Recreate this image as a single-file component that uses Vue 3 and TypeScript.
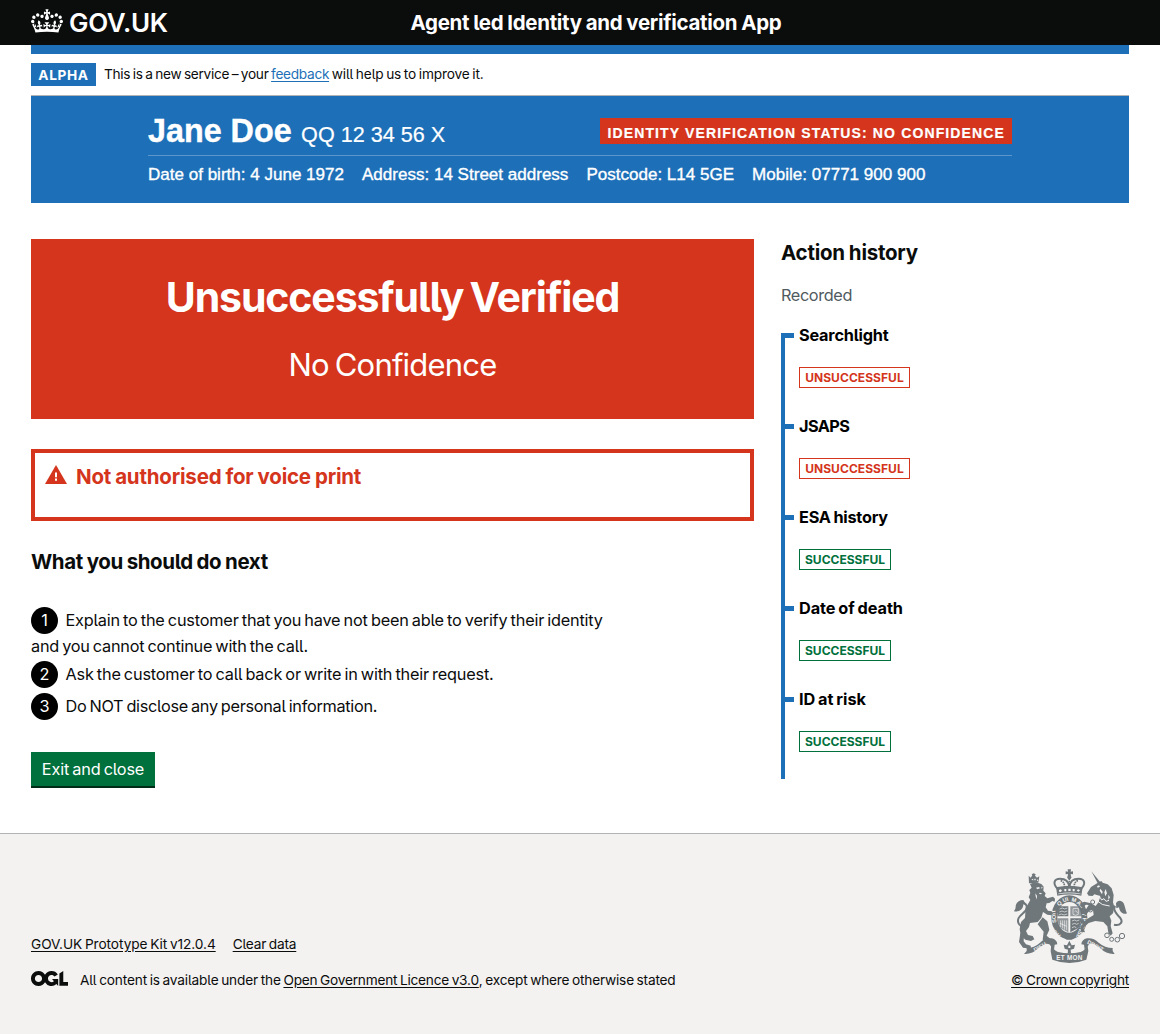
<script setup lang="ts">
interface Check {
  name: string
  passed: boolean
  tracking: string
}

interface Step {
  lines: { text: string; tracking: string }[]
}

const checks: Check[] = [
  { name: 'Searchlight', passed: false, tracking: '-0.2px' },
  { name: 'JSAPS', passed: false, tracking: '-0.6px' },
  { name: 'ESA history', passed: true, tracking: '-0.23px' },
  { name: 'Date of death', passed: true, tracking: '-0.05px' },
  { name: 'ID at risk', passed: true, tracking: '-0.02px' },
]

const steps: Step[] = [
  {
    lines: [
      { text: 'Explain to the customer that you have not been able to verify their identity', tracking: '-0.2px' },
      { text: 'and you cannot continue with the call.', tracking: '-0.24px' },
    ],
  },
  { lines: [{ text: 'Ask the customer to call back or write in with their request.', tracking: '-0.2px' }] },
  { lines: [{ text: 'Do NOT disclose any personal information.', tracking: '-0.3px' }] },
]

const details = [
  'Date of birth: 4 June 1972',
  'Address: 14 Street address',
  'Postcode: L14 5GE',
  'Mobile: 07771 900 900',
]
</script>

<template>
  <div class="page">
    <header class="header">
      <a class="logo">
        <svg class="crown" viewBox="0 0 132 97" width="32" height="24" aria-hidden="true">
          <path fill="currentColor" fill-rule="evenodd" d="M25 30.2c3.5 1.5 7.7-.2 9.1-3.7 1.5-3.6-.2-7.8-3.9-9.2-3.6-1.4-7.6.3-9.1 3.9-1.4 3.5.3 7.5 3.9 9zM9 39.5c3.6 1.5 7.8-.2 9.2-3.7 1.5-3.6-.2-7.8-3.9-9.1-3.6-1.5-7.6.2-9.1 3.8-1.4 3.5.3 7.5 3.8 9zM4.4 57.2c3.5 1.5 7.7-.2 9.1-3.8 1.5-3.6-.2-7.7-3.9-9.1-3.5-1.5-7.6.3-9.1 3.8-1.4 3.5.3 7.6 3.9 9.1zm38.3-21.4c3.5 1.5 7.7-.2 9.1-3.8 1.5-3.6-.2-7.7-3.9-9.1-3.6-1.5-7.6.3-9.1 3.8-1.3 3.6.4 7.7 3.9 9.1zm64.4-5.6c-3.6 1.5-7.8-.2-9.1-3.7-1.5-3.6.2-7.8 3.8-9.2 3.6-1.4 7.7.3 9.2 3.9 1.3 3.5-.4 7.5-3.9 9zm15.9 9.3c-3.6 1.5-7.7-.2-9.1-3.7-1.5-3.6.2-7.8 3.7-9.1 3.6-1.5 7.7.2 9.2 3.8 1.5 3.5-.3 7.5-3.8 9zm4.7 17.7c-3.6 1.5-7.8-.2-9.2-3.8-1.5-3.6.2-7.7 3.9-9.1 3.6-1.5 7.7.3 9.2 3.8 1.3 3.5-.4 7.6-3.9 9.1zM89.3 35.8c-3.6 1.5-7.8-.2-9.2-3.8-1.4-3.6.2-7.7 3.9-9.1 3.6-1.5 7.7.3 9.2 3.8 1.4 3.6-.3 7.7-3.9 9.1zM69.7 17.7l8.9 4.7V9.3l-8.9 2.8c-.2-.3-.5-.6-.9-.9L72.4 0H59.6l3.5 11.2c-.3.3-.6.5-.9.9l-8.8-2.8v13.1l8.8-4.7c.3.3.6.7.9.9l-5 15.4v.1c-.2.8-.4 1.6-.4 2.4 0 4.1 3.1 7.5 7 8.1h.2c.3 0 .7.1 1 .1.4 0 .7 0 1-.1h.2c4-.6 7.1-4.1 7.1-8.1 0-.8-.1-1.7-.4-2.4V34l-5.1-15.4c.4-.2.7-.6 1-.9zM66 92.8c16.9 0 32.8 1.1 47.1 3.2 4-16.9 8.9-26.7 14-33.5l-9.6-3.4c1 4.9 1.1 7.2 0 10.2-1.5-1.4-3-4.3-4.2-8.7L108.6 76c2.8-2 5-3.2 7.5-3.3-4.4 9.4-10 11.9-13.6 11.2-4.3-.8-6.3-4.6-5.6-7.9 1-4.7 5.7-5.9 8-.5 4.3-8.7-3-11.4-7.6-8.8 7.1-7.2 7.9-13.5 2.1-21.1-8 6.1-8.1 12.3-4.5 20.8-4.7-5.4-12.1-2.5-9.5 6.2 3.4-5.2 7.9-2 7.2 3.1-.6 4.3-6.4 7.8-13.5 7.2-10.3-.9-10.9-8-11.2-13.8 2.5-.5 7.1 1.8 11 7.3L80.2 60c-4.1 4.4-8 5.3-12.3 5.4 1.4-4.4 8-11.6 8-11.6H55.5s6.4 7.2 7.9 11.6c-4.2-.1-8-1-12.3-5.4l1.4 16.4c3.9-5.5 8.5-7.7 10.9-7.3-.3 5.8-.9 12.8-11.1 13.8-7.2.6-12.9-2.9-13.5-7.2-.7-5 3.8-8.3 7.1-3.1 2.7-8.7-4.6-11.6-9.4-6.2 3.7-8.5 3.6-14.7-4.6-20.8-5.8 7.6-5 13.9 2.2 21.1-4.7-2.6-11.9.1-7.7 8.8 2.3-5.5 7.1-4.2 8.1.5.7 3.3-1.3 7.1-5.7 7.9-3.5.7-9-1.8-13.5-11.2 2.5.1 4.7 1.3 7.5 3.3l-4.7-15.4c-1.2 4.4-2.7 7.2-4.3 8.7-1.1-3-.9-5.3 0-10.2l-9.5 3.4c5 6.9 9.9 16.7 14 33.5 14.8-2.1 30.8-3.2 47.7-3.2z" />
        </svg>
        <span class="logo-text">GOV.UK</span>
      </a>
      <span class="service">Agent led Identity and verification App</span>
    </header>

    <div class="container">
      <div class="header-bar"></div>
      <div class="phase">
        <strong class="phase-tag">ALPHA</strong>
        <span class="phase-text"><span class="p1">This is a new service – your </span><a class="feedback">feedback</a><span class="p2"> will help us to improve it.</span></span>
      </div>

      <section class="person">
        <div class="person-inner">
          <div class="person-top">
            <div class="person-name"><strong>Jane Doe</strong><span>QQ 12 34 56 X</span></div>
            <strong class="status">IDENTITY VERIFICATION STATUS: NO CONFIDENCE</strong>
          </div>
          <div class="person-details">
            <span v-for="d in details" :key="d">{{ d }}</span>
          </div>
        </div>
      </section>

      <div class="columns">
        <main class="main">
          <div class="panel">
            <h1>Unsuccessfully Verified</h1>
            <p>No Confidence</p>
          </div>
          <div class="warning">
            <svg viewBox="0 0 22 19" width="22" height="19" aria-hidden="true">
              <path fill="currentColor" d="M11 0 22 19H0z" />
              <path fill="#fff" d="M10 7.4h2v4.8h-2zM10 13.6h2v2.1h-2z" />
            </svg>
            <h2>Not authorised for voice print</h2>
          </div>
          <h2 class="next">What you should do next</h2>
          <ol class="steps">
            <li v-for="(step, i) in steps" :key="i">
              <span class="number">{{ i + 1 }}</span>
              <template v-for="(line, j) in step.lines" :key="j">
                <br v-if="j > 0" /><span :style="{ letterSpacing: line.tracking }">{{ line.text }}</span>
              </template>
            </li>
          </ol>
          <button class="button" type="button">Exit and close</button>
        </main>

        <aside class="history">
          <h2>Action history</h2>
          <p>Recorded</p>
          <ul class="timeline">
            <li v-for="c in checks" :key="c.name">
              <h3 :style="{ letterSpacing: c.tracking }">{{ c.name }}</h3>
              <strong class="badge" :class="{ passed: c.passed }">{{ c.passed ? 'SUCCESSFUL' : 'UNSUCCESSFUL' }}</strong>
            </li>
          </ul>
        </aside>
      </div>
    </div>

    <footer class="footer">
      <div class="footer-inner">
        <div>
          <div class="footer-links">
            <a class="kit">GOV.UK Prototype Kit v12.0.4</a>
            <a class="clear">Clear data</a>
          </div>
          <div class="licence">
            <svg viewBox="0 0 483.2 195.7" width="37" height="15" aria-hidden="true">
              <path fill="currentColor" d="M421.5 142.8V.1l-50.7 32.3v161.1h112.4v-50.7zm-122.3-9.6A47.12 47.12 0 0 1 221 97.8c0-26 21.1-47.1 47.1-47.1 16.7 0 31.4 8.7 39.7 21.8l42.7-27.2A97.63 97.63 0 0 0 268.1 0c-36.5 0-68.3 20.1-85.1 49.7A98 98 0 0 0 97.8 0C43.9 0 0 43.9 0 97.8s43.9 97.8 97.8 97.8c36.5 0 68.3-20.1 85.1-49.7a97.76 97.76 0 0 0 149.6 25.4l19.4 22.2h3v-87.8h-80l24.3 27.5zM97.8 145c-26 0-47.1-21.1-47.1-47.1s21.1-47.1 47.1-47.1 47.1 21.1 47.1 47.1S123.8 145 97.8 145" />
            </svg>
            <span><span class="l1">All content is available under the </span><a class="l2">Open Government Licence v3.0</a><span class="l3">, except where otherwise stated</span></span>
          </div>
        </div>
        <a class="copyright">
          <svg viewBox="42 27 339 282" width="113" height="94" aria-hidden="true">
            <g fill="#6f777b" stroke="none">
              <!-- centre crown -->
              <path d="M203 28h10l-1 7 7-1v9l-7-1 1 8h-10l1-8-7 1v-9l7 1z" />
              <g fill="none" stroke="#6f777b">
                <path stroke-width="6" d="M172 86c-15-16-9-30 8-30 14 0 26 6 28 25 2-19 14-25 28-25 17 0 23 14 8 30" />
                <path stroke-width="5" stroke-dasharray="5 2" d="M208 48v36M182 62c8 2 12 9 12 22M234 62c-8 2-12 9-12 22" />
              </g>
              <circle cx="208" cy="52" r="6" />
              <path d="M168 82q40-9 80 0l-4 25q-36-7-72 0z" />
              <path fill="#f3f2f1" d="M177 90l5-2 4 4-4 4-5-1zM193 87h6v7h-6zM205 86h7v7h-7zM218 87h6v7h-6zM230 91l5-3 5 3-5 4zM174 101q34-7 68 0v2q-34-7-68 0z" />
              <!-- garter and shield -->
              <ellipse cx="208" cy="172" rx="54" ry="66" />
              <ellipse cx="208" cy="172" rx="36" ry="46" fill="#f3f2f1" />
              <g fill="#f3f2f1" font-family="Liberation Sans, sans-serif" font-weight="700" font-size="17">
                <text transform="translate(169 188) rotate(-95)">SOIT</text>
                <text transform="translate(177 139) rotate(-42)">Q</text>
                <text transform="translate(190 127) rotate(-18)">UI</text>
                <text transform="translate(214 124) rotate(14)">M</text>
                <text transform="translate(229 129) rotate(44)">AL</text>
                <text transform="translate(246 158) rotate(84)">Y P</text>
                <text transform="translate(245 190) rotate(112)">ENSE</text>
                <text transform="translate(183 226) rotate(-135)">HON</text>
              </g>
              <path d="M176 139h29v30h-33zM211 175h33q-1 20-10 30l-23 12z" />
              <path d="M211 139h29l4 15v15h-33zM172 175h33v42l-23-12q-10-14-10-30z" opacity=".75" />
              <g fill="none" stroke="#f3f2f1" stroke-width="2">
                <path d="M179 147l8-3 7 3 8-3M178 156l8-3 7 3 9-3M176 165l8-3 8 3 10-3M216 183l8-3 6 3 8-3M216 193l8-3 6 3 6-3M216 203l7-3 6 3" />
                <path d="M219 146v17l8 3 8-3v-18zM224 154c6-6 6 7 9 3M182 181v20M188 181v24M194 181v28M200 181v30M180 190l20 9" />
              </g>
              <!-- lion -->
              <path d="M86 47l6 6 5-7-2-3 6-3 6 3-2 4 6 6 7-4-3 19-28 2z" />
              <path fill="#f3f2f1" d="M94 60l4-4 3 5zM103 56h4v5h-4zM111 58l4 3-4 3z" />
              <path d="M90 72q15-8 34 0l7 8-1 12 7 8-3 8 8 7 17-5 6 6-1 9-7-2-9 6-8 1-3 12 7 10 11 2 4 6-5 6-12-2-13-8-5 17-11 13-23 3-3 12-9 12 6 12 14 3 5 10-10 5-17-4-14-14-3-17 4-22 12-12 2-30 14-24-5-8 5-13-3-9 7-7z" />
              <path d="M128 172l14 12 6 25-8 18 16 14 4 9-14 1-18-12 3-24-18-22z" />
              <path fill="#f3f2f1" d="M108 83l9-2 3 4-8 3zM124 80l4 2-3 5zM119 98l7 2-3 3-6-2zM106 100l5 7-1 12-3-10z" />
              <path d="M61 220l-4 26 12 17 24 3-1-9-14-4-7-9 1-20z" />
              <path fill="none" stroke="#6f777b" stroke-width="6" d="M77 182c2 16-12 22-20 10-11-18 10-29 19-39 7-9 5-20-4-24" />
              <path d="M70 120c-13 0-23 8-23 20 0 8-4 10-5 14 15 3 28-6 28-21l9 2z" />
              <!-- unicorn -->
              <path d="M274 34l27 33-7 4z" />
              <path d="M296 67l8-4 4 5 15 5 12 12 6 20-2 22 4 14-4 19-10 9 5 13-2 16 6 22-6 7-7-9-3-19-12-13-24-3-20 6-16 14 5 14-12-2-2-14 17-22 23-14-2-16-12 4-9 12-10-4 2-9 8-4 8-13-8-1-10 8-8-4 4-9 9-4 20 5 14 8 9-12 5-18-18-5-5 5-12-1-5-7 12-19z" />
              <path fill="#f3f2f1" d="M291 79l6-3 3 4-7 3zM301 86l7 9-2 8-7-11zM317 87l4 13-5 9-3-12zM325 104l5 8-5 8z" />
              <path fill="none" stroke="#f3f2f1" stroke-width="3" d="M290 110l5 7 5-5 5 8 7-4 6 8 9-3M288 120q18 18 41 18" />
              <path fill="none" stroke="#6f777b" stroke-width="6" d="M342 194c19 5 28-8 19-20-12-13-23-25-16-37" />
              <path d="M348 130c4-11 18-10 23 0 4 9 6 23 10 30-10 5-22-2-24-18l-8 3z" />
              <g fill="none" stroke="#6f777b" stroke-width="3">
                <circle cx="366" cy="228" r="8" /><circle cx="352" cy="239" r="7" />
                <circle cx="335" cy="238" r="6" /><circle cx="321" cy="226" r="7" />
                <circle cx="271" cy="149" r="7" /><circle cx="278" cy="126" r="6" />
              </g>
              <!-- rose and ribbon -->
              <path d="M190 231q18-12 36 0l-10 8h-16zM208 242l7 14 10-2-3 12-10 3 1 12h-10l1-12-10-3-3-12 10 2z" />
              <path fill="#f3f2f1" d="M205 257h6v7h-6z" />
              <path d="M80 264q23 0 40-16 15-15 35-13 16 4 17 18l-8 1-2 15-14-16q-8-4-17 1l-16 11q-19 19-43 17l8-9z" />
              <path d="M338 264q-23 0-42-16-15-15-35-13-16 4-17 18l8 1 2 15 14-16q8-4 17 1l16 11q19 19 43 17l-6-9z" />
              <path d="M154 250q4 20 20 26 34 8 68 0 17-6 20-26l3 24-6 25q-50 20-102 0l-5-25z" />
            </g>
            <g fill="#f3f2f1" font-family="Liberation Sans, sans-serif" font-weight="700">
              <text x="169" y="300" font-size="19" textLength="78">ET MON</text>
              <text x="105" y="276" font-size="17" transform="rotate(-30 105 276)">DIEU</text>
              <text x="260" y="250" font-size="17" transform="rotate(28 260 250)">DROIT</text>
            </g>
          </svg>
          <span>© Crown copyright</span>
        </a>
      </div>
    </footer>
  </div>
</template>

<style>
body {
  margin: 0;
  background: #fff;
}
</style>

<style scoped>
.page {
  display: flex;
  flex-direction: column;
  min-height: 1034px;
  font-family: Inter, Roboto, sans-serif;
  font-feature-settings: 'cv05', 'calt' 0;
  font-size: 16.3px;
  color: #0b0c0c;
  -webkit-font-smoothing: antialiased;
}
h1, h2, h3, p, ol, ul {
  margin: 0;
  padding: 0;
}
.header {
  display: flex;
  align-items: center;
  box-sizing: border-box;
  height: 45px;
  padding: 0 31px;
  background: #0b0c0c;
  color: #fff;
}
.logo {
  display: flex;
  align-items: center;
  width: 379.5px;
}
.crown {
  margin: -3px 6px 0 0;
}
.logo-text {
  font-size: 26px;
  font-weight: 600;
  line-height: 30px;
  letter-spacing: -0.3px;
}
.service {
  font-size: 20.5px;
  font-weight: 700;
  letter-spacing: -0.31px;
  word-spacing: -0.6px;
}
.container {
  margin: 0 31px;
}
.header-bar {
  height: 9px;
  background: #1d70b8;
}
.phase {
  display: flex;
  align-items: center;
  box-sizing: border-box;
  height: 42px;
  border-bottom: 1px solid #b1b4b6;
}
.phase-tag {
  box-sizing: border-box;
  width: 65px;
  height: 23px;
  margin-right: 8px;
  background: #1d70b8;
  color: #fff;
  font-size: 13.7px;
  line-height: 24px;
  letter-spacing: 0.6px;
  text-align: center;
}
.phase-text {
  margin-top: -1px;
  font-size: 13.7px;
  word-spacing: -1px;
  white-space: pre;
}
.p1 { letter-spacing: -0.3px; }
.p2 { letter-spacing: -0.16px; }
.feedback {
  color: #1d70b8;
  letter-spacing: -0.318px;
  text-decoration: underline;
  text-underline-offset: 2px;
}
.person {
  height: 107px;
  background: #1d70b8;
  color: #fff;
  font-family: 'Liberation Sans', Arial, sans-serif;
}
.person-inner {
  width: 864px;
  margin: 0 117px;
}
.person-top {
  display: flex;
  justify-content: space-between;
  box-sizing: border-box;
  height: 60px;
  border-bottom: 1px solid #5b97cc;
}
.person-name {
  padding-top: 15px;
  line-height: 40px;
  white-space: nowrap;
}
.person-name strong {
  margin-right: 9.5px;
  font-size: 32.3px;
  -webkit-text-stroke: 0.4px #fff;
}
.person-name span {
  font-size: 21.6px;
  -webkit-text-stroke: 0.2px #fff;
}
.status {
  height: 26px;
  margin-top: 22px;
  padding: 0 7px;
  background: #d4351c;
  font-size: 14px;
  line-height: 30px;
  letter-spacing: 1.13px;
  white-space: nowrap;
  -webkit-text-stroke: 0.2px #fff;
}
.person-details {
  display: flex;
  gap: 18px;
  padding-top: 9px;
  font-size: 17.05px;
  line-height: 20px;
  -webkit-text-stroke: 0.35px #fff;
  white-space: nowrap;
}
.columns {
  display: flex;
  gap: 27px;
  padding-top: 36px;
}
.main {
  width: 723px;
  height: 594px;
}
.panel {
  box-sizing: border-box;
  height: 180px;
  padding-top: 33px;
  background: #d4351c;
  color: #fff;
  text-align: center;
}
.panel h1 {
  font-size: 41px;
  line-height: 50px;
  letter-spacing: -1.12px;
  word-spacing: -2.5px;
}
.panel p {
  padding-top: 23px;
  font-size: 31px;
  line-height: 40px;
  letter-spacing: -0.79px;
  word-spacing: -2px;
}
.warning {
  display: flex;
  gap: 9px;
  box-sizing: border-box;
  height: 72px;
  margin-top: 30px;
  padding: 12px 10px;
  border: 4px solid #d4351c;
  color: #d4351c;
}
h2 {
  font-size: 20.5px;
  line-height: 26px;
  letter-spacing: -0.24px;
  word-spacing: -0.6px;
}
.warning h2 {
  margin-top: -1px;
  letter-spacing: -0.2px;
}
.next {
  margin-top: 28px;
  letter-spacing: -0.4px;
}
.steps {
  margin-top: 32px;
  list-style: none;
  line-height: 24px;
  word-spacing: -1.2px;
}
.steps li {
  margin-bottom: 5px;
}
.steps li:first-child {
  margin-bottom: 3px;
}
.number {
  display: inline-block;
  width: 27px;
  height: 27px;
  margin-right: 7.5px;
  border-radius: 50%;
  background: #000;
  color: #fff;
  line-height: 27px;
  text-align: center;
}
.button {
  display: block;
  width: 124px;
  height: 36px;
  margin-top: 32px;
  padding: 0;
  border: 0;
  border-bottom: 2px solid #002d18;
  background: #00703c;
  color: #fff;
  font: inherit;
  letter-spacing: -0.18px;
  word-spacing: -1.2px;
}
.history {
  width: 348px;
}
.history h2 {
  margin-top: 1px;
}
.history p {
  margin-top: 17px;
  color: #505a5f;
  line-height: 24px;
  letter-spacing: -0.39px;
}
.timeline {
  height: 446px;
  margin-top: 26px;
  border-left: 4px solid #1d70b8;
  list-style: none;
}
.timeline li {
  position: relative;
  height: 91px;
  padding-left: 14px;
}
.timeline li::before {
  content: '';
  position: absolute;
  left: 0;
  top: 0;
  width: 9px;
  height: 5px;
  background: #1d70b8;
}
.timeline h3 {
  height: 34px;
  color: #000;
  font-size: 16.3px;
  line-height: 5px;
  word-spacing: -1px;
}
.badge {
  display: block;
  width: max-content;
  height: 19px;
  padding: 0 5.2px;
  border: 1px solid #d4351c;
  color: #d4351c;
  font-size: 12px;
  line-height: 20px;
  letter-spacing: 0.05px;
}
.badge.passed {
  padding: 0 4.8px 0 5px;
  border-color: #00703c;
  color: #00703c;
  letter-spacing: 0;
}
.footer {
  flex: 1;
  border-top: 1px solid #b1b4b6;
  background: #f3f2f1;
  font-size: 13.7px;
  line-height: 18px;
  word-spacing: -1px;
}
.footer-inner {
  display: flex;
  justify-content: space-between;
  align-items: flex-end;
  box-sizing: border-box;
  height: 155px;
  margin: 0 31px;
}
.footer a {
  text-decoration: underline;
  text-underline-offset: 2px;
}
.footer-links {
  display: flex;
  gap: 17px;
  margin-bottom: 18px;
}
.kit { letter-spacing: -0.08px; }
.clear { letter-spacing: -0.21px; }
.licence {
  display: flex;
  gap: 12px;
  white-space: pre;
}
.l1 { letter-spacing: -0.17px; }
.l2 { letter-spacing: -0.23px; }
.l3 { letter-spacing: -0.2px; }
.copyright {
  display: flex;
  flex-direction: column;
  align-items: flex-end;
  width: 118px;
  gap: 8px;
  letter-spacing: -0.23px;
  white-space: nowrap;
}
.copyright svg {
  margin-right: 2px;
  letter-spacing: 0;
  word-spacing: 0;
}
</style>
